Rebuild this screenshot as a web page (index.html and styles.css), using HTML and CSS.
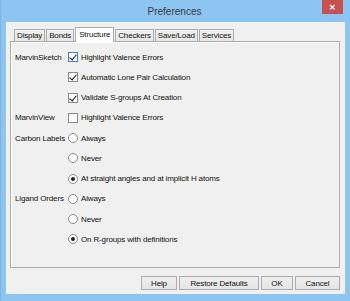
FILE: index.html
```html
<!DOCTYPE html>
<html lang="en">
<head>
    <meta charset="UTF-8">
    <title>Preferences</title>
    <link rel="stylesheet" href="styles.css">
</head>
<body>
    <div class="window">
        <div class="titlebar">
            <span class="title">Preferences</span>
            <div class="close">&#x2715;</div>
        </div>
        <div class="client">
            <div class="tabs">
                <div class="tab">Display</div>
                <div class="tab">Bonds</div>
                <div class="tab active">Structure</div>
                <div class="tab">Checkers</div>
                <div class="tab">Save/Load</div>
                <div class="tab">Services</div>
            </div>
            <div class="panel">
                <div class="grid">
                    <div class="label">MarvinSketch</div>
                    <div class="ctl"><span class="box checked focus"></span>Highlight Valence Errors</div>
                    <div></div>
                    <div class="ctl"><span class="box checked"></span>Automatic Lone Pair Calculation</div>
                    <div></div>
                    <div class="ctl"><span class="box checked"></span>Validate S-groups At Creation</div>

                    <div class="label">MarvinView</div>
                    <div class="ctl"><span class="box"></span>Highlight Valence Errors</div>

                    <div class="label">Carbon Labels</div>
                    <div class="ctl"><span class="radio"></span>Always</div>
                    <div></div>
                    <div class="ctl"><span class="radio"></span>Never</div>
                    <div></div>
                    <div class="ctl"><span class="radio on"></span>At straight angles and at implicit H atoms</div>

                    <div class="label">Ligand Orders</div>
                    <div class="ctl"><span class="radio"></span>Always</div>
                    <div></div>
                    <div class="ctl"><span class="radio"></span>Never</div>
                    <div></div>
                    <div class="ctl"><span class="radio on"></span>On R-groups with definitions</div>
                </div>
            </div>
            <div class="buttons">
                <button class="btn help">Help</button>
                <button class="btn restore">Restore Defaults</button>
                <button class="btn ok">OK</button>
                <button class="btn cancel">Cancel</button>
            </div>
        </div>
    </div>
</body>
</html>
```

FILE: styles.css
```css
* { box-sizing: border-box; }
body { margin: 0; background: #8cc4f2; font-family: 'Liberation Sans', Arial, sans-serif; color: #111; }

.window { width: 350px; height: 301px; position: relative; border-left: 1px solid #7fb4e0; }

/* Title bar */
.titlebar { height: 22px; display: flex; justify-content: center; align-items: center; }
.title { font-size: 10px; color: #3a3a3a; margin-left: -2px; }
.close { position: absolute; top: 0; right: 7px; width: 21px; height: 14px; background: #c75050; color: white; font-size: 8px; font-weight: bold; display: flex; align-items: center; justify-content: center; }

/* Client area */
.client { margin: 0 5px; height: 272px; background: #f0f0f0; border-left: 1px solid #fbfbfb; padding-top: 5px; font-size: 8px; letter-spacing: -0.15px; }

.tabs { display: flex; align-items: flex-end; height: 14px; margin-left: 7px; position: relative; z-index: 1; }
.tab { height: 12px; padding: 0 2px; margin-right: 1px; border: 1px solid #acacac; border-bottom: none; background: linear-gradient(#f2f2f2, #e6e6e6); line-height: 11px; white-space: nowrap; }
.tab.active { height: 15px; margin-bottom: -1px; background: #ffffff; padding: 0 3px; line-height: 13px; }

.panel { margin-left: 3px; margin-right: 5px; height: 227px; border: 1px solid #acacac; box-shadow: inset 1px 1px 0 #ffffff; padding: 5px 0 0 4px; }

.grid { display: grid; grid-template-columns: 53px auto; grid-auto-rows: 20.25px; }
.label { display: flex; align-items: center; white-space: nowrap; }
.ctl { display: flex; align-items: center; white-space: nowrap; }

.box { width: 10px; height: 10px; border: 1px solid #8a8a8a; background: white; margin-right: 3px; position: relative; }
.box.focus { border-color: #3c7fd1; }
.box.checked::after { content: ""; position: absolute; left: 2px; top: 0; width: 3px; height: 6px; border: solid #111; border-width: 0 1.5px 1.5px 0; transform: rotate(40deg); }

.radio { width: 10px; height: 10px; border: 1px solid #8a8a8a; border-radius: 50%; background: white; margin-right: 3px; position: relative; }
.radio.on::after { content: ""; position: absolute; left: 2px; top: 2px; width: 4px; height: 4px; border-radius: 50%; background: #222; }

/* Buttons */
.buttons { display: flex; justify-content: flex-end; gap: 2px; margin-top: 8px; margin-right: 5px; }
.btn { height: 14px; padding: 0; font-family: inherit; font-size: 8px; letter-spacing: -0.15px; color: #111; border: 1px solid #acacac; background: linear-gradient(#f0f0f0, #e5e5e5); }
.help { width: 36px; }
.restore { width: 80px; }
.ok { width: 32px; }
.cancel { width: 45px; }
```
